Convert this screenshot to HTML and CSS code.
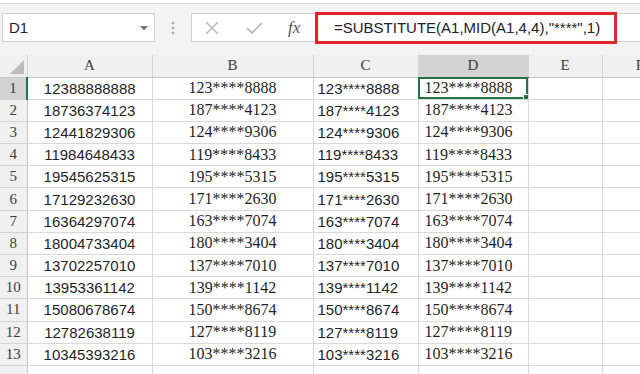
FILE: index.html
```html
<!DOCTYPE html>
<html>
<head>
    <meta charset="utf-8">
    <title>Sheet</title>
    <link rel="stylesheet" href="styles.css">
</head>
<body>
    <div class="toolbar">
        <div class="namebox">
            <span>D1</span>
            <svg class="arrow" width="8" height="5" viewBox="0 0 8 5"><path d="M0 0H8L4 4.5Z" fill="#777"/></svg>
        </div>
        <div class="grip">
            <svg width="4" height="14" viewBox="0 0 4 14"><circle cx="2" cy="2" r="1.3" fill="#a8a8a8"/><circle cx="2" cy="7" r="1.3" fill="#a8a8a8"/><circle cx="2" cy="12" r="1.3" fill="#a8a8a8"/></svg>
        </div>
        <div class="formula">
            <div class="fbtns">
                <svg width="14" height="14" viewBox="0 0 14 14"><path d="M1 1L13 13M13 1L1 13" stroke="#bdbdbd" stroke-width="1.6"/></svg>
                <svg width="17" height="12" viewBox="0 0 17 12"><path d="M1 6L6 11L16 1" stroke="#bdbdbd" stroke-width="1.8" fill="none"/></svg>
                <span class="fx">fx</span>
            </div>
            <div class="finput">
                <div class="mark">=SUBSTITUTE(A1,MID(A1,4,4),"****",1)</div>
            </div>
        </div>
    </div>
    <div class="viewport">
    <table class="sheet">
        <colgroup>
            <col class="c-hd"><col class="c-a"><col class="c-b"><col class="c-c"><col class="c-d"><col class="c-e"><col class="c-f">
        </colgroup>
        <thead>
            <tr>
                <th class="corner"><span class="tri"></span></th>
                <th>A</th><th>B</th><th>C</th><th class="sel">D</th><th>E</th><th>F</th>
            </tr>
        </thead>
        <tbody>
            <tr><th class="rsel">1</th><td class="num">12388888888</td><td class="mid">123****8888</td><td>123****8888</td><td class="srf active">123****8888<span class="handle"></span></td><td></td><td></td></tr>
            <tr><th>2</th><td class="num">18736374123</td><td class="mid">187****4123</td><td>187****4123</td><td class="srf">187****4123</td><td></td><td></td></tr>
            <tr><th>3</th><td class="num">12441829306</td><td class="mid">124****9306</td><td>124****9306</td><td class="srf">124****9306</td><td></td><td></td></tr>
            <tr><th>4</th><td class="num">11984648433</td><td class="mid">119****8433</td><td>119****8433</td><td class="srf">119****8433</td><td></td><td></td></tr>
            <tr><th>5</th><td class="num">19545625315</td><td class="mid">195****5315</td><td>195****5315</td><td class="srf">195****5315</td><td></td><td></td></tr>
            <tr><th>6</th><td class="num">17129232630</td><td class="mid">171****2630</td><td>171****2630</td><td class="srf">171****2630</td><td></td><td></td></tr>
            <tr><th>7</th><td class="num">16364297074</td><td class="mid">163****7074</td><td>163****7074</td><td class="srf">163****7074</td><td></td><td></td></tr>
            <tr><th>8</th><td class="num">18004733404</td><td class="mid">180****3404</td><td>180****3404</td><td class="srf">180****3404</td><td></td><td></td></tr>
            <tr><th>9</th><td class="num">13702257010</td><td class="mid">137****7010</td><td>137****7010</td><td class="srf">137****7010</td><td></td><td></td></tr>
            <tr><th>10</th><td class="num">13953361142</td><td class="mid">139****1142</td><td>139****1142</td><td class="srf">139****1142</td><td></td><td></td></tr>
            <tr><th>11</th><td class="num">15080678674</td><td class="mid">150****8674</td><td>150****8674</td><td class="srf">150****8674</td><td></td><td></td></tr>
            <tr><th>12</th><td class="num">12782638119</td><td class="mid">127****8119</td><td>127****8119</td><td class="srf">127****8119</td><td></td><td></td></tr>
            <tr><th>13</th><td class="num">10345393216</td><td class="mid">103****3216</td><td>103****3216</td><td class="srf">103****3216</td><td></td><td></td></tr>
            <tr><th></th><td></td><td></td><td></td><td></td><td></td><td></td></tr>
        </tbody>
    </table>
    </div>
</body>
</html>
```
FILE: styles.css
```css
html, body {
    margin: 0;
    padding: 0;
    overflow: hidden;
}
body {
    width: 640px;
    height: 374px;
    background: #fff;
    font-family: "Liberation Sans", Arial, sans-serif;
    color: #1f1f1f;
}
.toolbar {
    box-sizing: border-box;
    height: 52px;
    margin-top: 3px;
    border-top: 1px solid #d9d9d9;
    background: #f3f3f3;
    padding: 9px 0 0 2px;
    display: flex;
    flex-direction: row;
    align-items: flex-start;
}
.namebox {
    box-sizing: border-box;
    width: 153px;
    height: 29px;
    background: #fff;
    border: 1px solid #cfcfcf;
    display: flex;
    align-items: center;
    justify-content: space-between;
    padding: 0 6px 0 6px;
    font-size: 15px;
}
.namebox .arrow {
    margin-top: 1px;
}
.grip {
    width: 36px;
    height: 29px;
    display: flex;
    align-items: center;
    justify-content: center;
}
.formula {
    flex: 1;
    display: flex;
    flex-direction: row;
    height: 29px;
    box-sizing: border-box;
    background: #fff;
    border: 1px solid #cfcfcf;
    border-right: none;
}
.fbtns {
    width: 123px;
    display: flex;
    align-items: center;
    padding-left: 13px;
    box-sizing: border-box;
}
.fbtns svg:nth-child(2) {
    margin-left: 27px;
}
.fx {
    margin-left: 25px;
    font-family: "Liberation Serif", serif;
    font-style: italic;
    font-size: 17px;
    color: #555;
}
.finput {
    flex: 1;
    display: flex;
    align-items: center;
}
.mark {
    box-sizing: border-box;
    width: 302px;
    height: 32px;
    margin-top: -2px;
    margin-bottom: -2px;
    border: 3px solid #e3252b;
    padding: 0 0 0 16px;
    display: flex;
    align-items: center;
    font-size: 15px;
    color: #222;
}
.viewport {
    width: 640px;
    overflow: hidden;
}
.sheet {
    border-collapse: collapse;
    table-layout: fixed;
    width: 678px;
}
.c-hd { width: 27px; }
.c-a { width: 125px; }
.c-b { width: 161px; }
.c-c { width: 105px; }
.c-d { width: 110px; }
.c-e { width: 74px; }
.c-f { width: 76px; }
th, td {
    height: 22.2px;
    padding: 0;
    white-space: nowrap;
    overflow: hidden;
    box-sizing: border-box;
}
thead th {
    height: 22px;
    background: #f0f0f0;
    border-right: 1px solid #d4d4d4;
    border-bottom: 1px solid #c6c6c6;
    font-family: "Liberation Serif", serif;
    font-weight: normal;
    font-size: 15px;
    color: #3c3c3c;
}
thead th.sel {
    background: #d3d3d3;
    border-bottom: 1px solid #217346;
}
.corner {
    position: relative;
}
.tri {
    position: absolute;
    right: 3px;
    bottom: 3px;
    width: 0;
    height: 0;
    border-left: 14px solid transparent;
    border-bottom: 14px solid #bcbcbc;
}
tbody th {
    background: #f0f0f0;
    border-right: 1px solid #c6c6c6;
    border-bottom: 1px solid #d4d4d4;
    font-family: "Liberation Serif", serif;
    font-weight: normal;
    font-size: 15px;
    color: #3c3c3c;
}
tbody th.rsel {
    background: #d3d3d3;
    border-right: 2px solid #217346;
}
td {
    border-right: 1px solid #d9d9d9;
    border-bottom: 1px solid #d9d9d9;
    font-size: 15px;
    padding: 0 4px;
}
td.num, td.mid {
    text-align: center;
}
td.mid, td.srf {
    font-family: "Liberation Serif", serif;
    font-size: 16px;
}
td.srf {
    padding-left: 6px;
}
td.active {
    position: relative;
    outline: 2px solid #217346;
    outline-offset: -2px;
}
.handle {
    position: absolute;
    right: -3px;
    bottom: -3px;
    width: 6px;
    height: 6px;
    background: #217346;
    border: 1px solid #fff;
}
```
